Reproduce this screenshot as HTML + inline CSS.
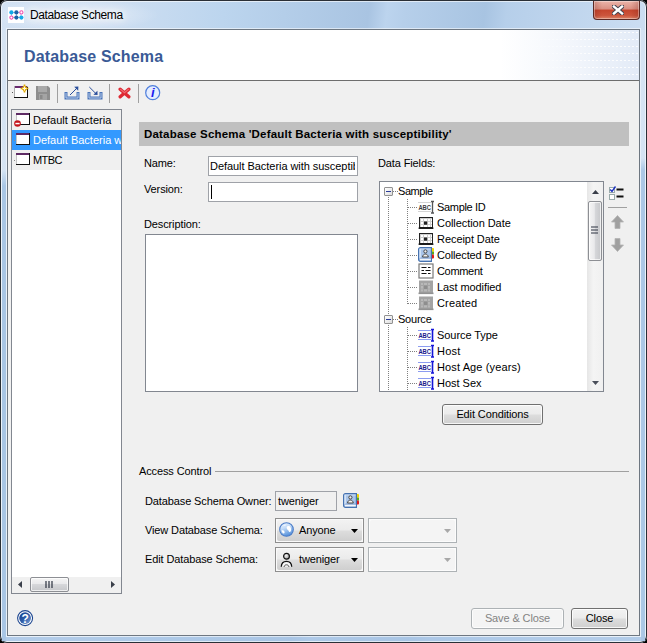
<!DOCTYPE html>
<html><head><meta charset="utf-8"><title>Database Schema</title>
<style>
*{box-sizing:border-box;margin:0;padding:0}
html,body{width:647px;height:643px;overflow:hidden;background:#000}
body{font-family:"Liberation Sans",sans-serif;font-size:11px;color:#000;position:relative}
div,span,svg{position:absolute}
.t{white-space:nowrap;line-height:14px;height:14px;letter-spacing:-.12px}
/* window frame */
#win{left:0;top:0;width:647px;height:643px;border-radius:7px;background:linear-gradient(97deg,#d3e2f3 0%,#cbddf1 18%,#bcd5ee 31%,#a9c4e2 51%,#bcd4ee 53.5%,#b6cfea 56%,#a8c4e2 67%,#b6cfea 70%,#cfe0f3 93%,#c8dbf0 100%);box-shadow:inset 0 0 0 1px #2a2f36, inset 0 0 0 2px rgba(255,255,255,.6)}
#clientglow{left:6px;top:28px;width:635px;height:609px;border:1px solid rgba(255,255,255,.55)}
#client{left:7px;top:29px;width:633px;height:607px;border:1px solid #6e7781;background:#f0f0f0}
#title{left:30px;top:8px;font-size:12px;letter-spacing:-.4px;text-shadow:0 0 6px #fff,0 0 10px #fff,0 0 14px rgba(255,255,255,.9)}
/* close button */
#closeb{left:593px;top:1px;width:47px;height:19px;border-radius:0 0 4px 4px;border:1px solid #5b2a25;border-top:none;background:linear-gradient(90deg,rgba(120,30,20,.25) 0%,rgba(120,30,20,0) 18%,rgba(120,30,20,0) 82%,rgba(120,30,20,.25) 100%),linear-gradient(180deg,#ebb5aa 0%,#d98f82 45%,#c5452d 50%,#cc553c 80%,#dc8468 100%);box-shadow:inset 0 0 0 1px rgba(255,255,255,.35)}
/* header */
#hdr{left:8px;top:30px;width:631px;height:50px;background:linear-gradient(90deg,#fff 0%,#fff 78%,#f4f7fc 88%,#e3ebf7 100%)}
.dl{left:520px;width:119px;height:1px;background:repeating-linear-gradient(90deg,rgba(255,255,255,.85) 0,rgba(255,255,255,.85) 2px,transparent 2px,transparent 4px);-webkit-mask-image:linear-gradient(90deg,transparent,#000 60%);mask-image:linear-gradient(90deg,transparent,#000 60%)}
#hdrline{left:8px;top:80px;width:631px;height:1px;background:#6d6d6d}
#hdrt{left:24px;top:48px;font-size:16px;font-weight:bold;color:#3a5a96;letter-spacing:.15px;line-height:18px;height:18px}
.sep{width:1px;height:19px;top:84px;background:#a0a0a0}
/* list */
#list{left:11px;top:109px;width:111px;height:485px;border:1px solid #828790;background:#fff}
.row{left:12px;width:109px;height:20px;background:#f0f0f0}
.row.sel{background:#3399ff}
.wi{width:14px;height:12px}
.dot{width:1px;height:1px;background:#8a8a8a;left:14px}
.inp{border:1px solid #9fa2a8;background:#fff}
.btn{border:1px solid #707070;border-radius:3px;background:linear-gradient(180deg,#f2f2f2 0%,#ebebeb 48%,#dddddd 52%,#cfcfcf 100%);box-shadow:inset 0 0 0 1px rgba(255,255,255,.8)}
.btn.cb{border-color:#8e8e8e;border-radius:0;background:#fafafa;box-shadow:none}
.btn.cb::before{content:"";position:absolute;left:1px;top:1px;right:1px;bottom:1px;border-radius:2px;background:linear-gradient(180deg,#f2f2f2 0%,#ebebeb 48%,#dddddd 52%,#cfcfcf 100%)}
.btn.dis{border-color:#adb2b5;background:#f4f4f4;box-shadow:inset 0 0 0 1px #fcfcfc}
.btn.cd{border-radius:0;border-color:#adb2b5;background:#fcfcfc;box-shadow:none}
.btn.cd::before{content:"";position:absolute;left:1px;top:1px;right:1px;bottom:1px;border-radius:2px;background:#f4f4f4}
.btn .t{left:0;right:0;text-align:center}
#tree{left:379px;top:181px;width:225px;height:211px;border:1px solid #828790;background:#fff;overflow:hidden}
.tr{left:57px;line-height:16px;height:16px;white-space:nowrap;letter-spacing:-.12px}
.ti{left:38px;width:16px;height:16px}
.vd{width:1px;background-image:linear-gradient(180deg,#808080 50%,transparent 50%);background-size:1px 2px}
.hd{height:1px;background-image:linear-gradient(90deg,#808080 50%,transparent 50%);background-size:2px 1px}
.exp{width:9px;height:9px;border:1px solid #919191;border-radius:1px;background:linear-gradient(135deg,#fff,#dcdcdc)}
.exp i{position:absolute;left:1px;top:3px;width:5px;height:1px;background:#2a3c9a}
</style></head><body>
<div id="win"></div>
<div style="left:2px;top:30px;width:4px;height:611px;background:linear-gradient(180deg,rgba(214,228,243,.9) 0,rgba(214,228,243,.9) 140px,rgba(169,198,229,1) 156px)"></div><div style="left:641px;top:30px;width:4px;height:611px;background:linear-gradient(180deg,rgba(214,228,243,.9) 0,rgba(214,228,243,.9) 128px,rgba(172,200,230,1) 140px)"></div><div style="left:2px;top:637px;width:643px;height:4px;background:rgba(169,198,229,.75)"></div>
<div id="clientglow"></div>
<div id="client"></div>
<div style="left:2px;top:2px;width:170px;height:26px;background:radial-gradient(ellipse 85px 16px at 72px 13px,rgba(255,255,255,.55),rgba(255,255,255,0))"></div>
<!-- title icon -->
<svg style="left:8px;top:7px" width="16" height="16" viewBox="0 0 16 16"><rect width="16" height="16" fill="#fff"/><path d="M3.5 5.5H13M3.5 10.5H13M3.5 5.5V10.5M8.5 5.5V10.5M13 5.5V10.5" stroke="#9cc8e8" stroke-width="1" fill="none"/><circle cx="3.4" cy="5.4" r="2.1" fill="#11a8e8"/><circle cx="8.4" cy="5.4" r="2.1" fill="#1d62a8"/><circle cx="13.4" cy="5.4" r="1.6" fill="#fff" stroke="#f04cb0" stroke-width="1.1"/><circle cx="3.4" cy="10.6" r="1.6" fill="#fff" stroke="#f04cb0" stroke-width="1.1"/><circle cx="8.4" cy="10.6" r="2.1" fill="#1d62a8"/><circle cx="13.4" cy="10.6" r="2.1" fill="#11a8e8"/></svg>
<span class="t" id="title">Database Schema</span>
<div id="closeb"><svg style="left:18px;top:4px" width="12" height="10" viewBox="0 0 12 10"><path d="M2 1.6L10 8.4M10 1.6L2 8.4" stroke="#43424e" stroke-width="4.4" stroke-linecap="square"/><path d="M2 1.6L10 8.4M10 1.6L2 8.4" stroke="#fff" stroke-width="2.5" stroke-linecap="square"/></svg></div>
<div id="hdr"></div><div class="dl" style="top:32px"></div><div class="dl" style="top:39px"></div><div class="dl" style="top:46px"></div><div class="dl" style="top:53px"></div><div class="dl" style="top:60px"></div><div class="dl" style="top:67px"></div><div class="dl" style="top:74px"></div><div id="hdrline"></div>
<span class="t" id="hdrt">Database Schema</span>

<!-- toolbar -->
<svg style="left:12px;top:83px" width="18" height="18" viewBox="0 0 18 18"><rect x="2.5" y="3.5" width="13" height="11" fill="#fff" stroke="#b0b0b0"/><path d="M2 14.5H16M15.5 4V15" stroke="#111" stroke-width="1"/><rect x="3" y="3" width="12" height="2" fill="#6a2a6e"/><path d="M12.5 2L15.8 5.5L12.5 9L9.2 5.5Z" fill="#e2aa00"/><path d="M12.5 1.4v8.2M8.6 5.5h7.8" stroke="#e2aa00" stroke-width="1.6"/><path d="M12.5 3.5v4M10.5 5.5h4" stroke="#fffbe0" stroke-width="1.2"/><rect x="0" y="9" width="1" height="1" fill="#555"/></svg>
<svg style="left:36px;top:86px" width="14" height="14" viewBox="0 0 14 14"><path d="M0 0H12L14 2V14H0Z" fill="#8e8e8e"/><rect x="2" y="0" width="9" height="6" fill="#a9a9a9"/><rect x="3" y="8" width="8" height="6" fill="#a4a4a4"/><rect x="4" y="9" width="2.5" height="4" fill="#8a8a8a"/></svg>
<div class="sep" style="left:57px"></div>
<svg style="left:64px;top:84px" width="17" height="17" viewBox="0 0 17 17"><path d="M2 8V14H14V8" fill="none" stroke="#4a74b8" stroke-width="3"/><path d="M2 9V14H14V9" fill="none" stroke="#b6cbea" stroke-width="1"/><path d="M6 11L13 4" stroke="#2b4f9c" stroke-width="1"/><path d="M10.2 2.8L14.4 2.6L14.2 6.8Z" fill="#2b4f9c"/></svg>
<svg style="left:87px;top:84px" width="17" height="17" viewBox="0 0 17 17"><path d="M2 8V14H14V8" fill="none" stroke="#4a74b8" stroke-width="3"/><path d="M2 9V14H14V9" fill="none" stroke="#b6cbea" stroke-width="1"/><path d="M2.3 3L9 9.7" stroke="#2b4f9c" stroke-width="1"/><path d="M10.4 6.8L10.6 11L6.4 10.8Z" fill="#2b4f9c"/></svg>
<div class="sep" style="left:109px"></div>
<svg style="left:118px;top:87px" width="13" height="12" viewBox="0 0 13 12"><path d="M2.2 2.2L10.8 9.8M10.8 2.2L2.2 9.8" stroke="#de2a34" stroke-width="3.4" stroke-linecap="round"/><path d="M2.6 2.4L6.5 5.6L10.4 2.4" stroke="#f06a70" stroke-width="1.2" stroke-linecap="round" fill="none"/></svg>
<div class="sep" style="left:138px"></div>
<svg style="left:145px;top:85px" width="16" height="16" viewBox="0 0 16 16"><circle cx="7.7" cy="7.7" r="7" fill="#e4edff" stroke="#4f7fdc" stroke-width="1.2"/><text x="7.9" y="12.2" font-family="Liberation Sans,sans-serif" font-style="italic" font-weight="bold" font-size="13" fill="#1a1af0" text-anchor="middle">i</text></svg>

<!-- list -->
<div id="list"></div>
<div class="row" style="top:110px"></div>
<div class="row sel" style="top:130px"></div>
<div class="row" style="top:150px"></div>
<svg class="wi" style="left:16px;top:113px" viewBox="0 0 14 12"><rect x=".5" y=".5" width="13" height="11" fill="#fff" stroke="#c4c4c4"/><path d="M0 11.5H14M13.5 0V12" stroke="#111"/><rect x="0" y="0" width="13" height="2" fill="#5e2a64"/></svg>
<svg style="left:14px;top:120px" width="7" height="7" viewBox="0 0 8 8"><circle cx="4" cy="4" r="3.8" fill="#c4141c"/><rect x="1.6" y="3.2" width="4.8" height="1.7" fill="#fff"/></svg>
<svg class="wi" style="left:16px;top:133px" viewBox="0 0 14 12"><rect x=".5" y=".5" width="13" height="11" fill="#fff" stroke="#c4c4c4"/><path d="M0 11.5H14M13.5 0V12" stroke="#111"/><rect x="0" y="0" width="13" height="2" fill="#5e2a64"/></svg>
<svg class="wi" style="left:16px;top:153px" viewBox="0 0 14 12"><rect x=".5" y=".5" width="13" height="11" fill="#fff" stroke="#c4c4c4"/><path d="M0 11.5H14M13.5 0V12" stroke="#111"/><rect x="0" y="0" width="13" height="2" fill="#5e2a64"/></svg>
<div class="dot" style="top:140px"></div><div class="dot" style="top:160px"></div><span class="t" style="left:33px;top:113px;letter-spacing:0">Default Bacteria</span>
<div style="left:33px;top:133px;width:88px;height:14px;overflow:hidden"><span class="t" style="left:0;top:0;color:#fff;letter-spacing:0">Default Bacteria with susceptibility</span></div>
<span class="t" style="left:33px;top:153px;letter-spacing:-.6px">MTBC</span>
<!-- list hscroll -->
<div style="left:12px;top:577px;width:109px;height:16px;background:#f0f0f0"></div>
<div style="left:30px;top:577px;width:39px;height:15px;border:1px solid #8d8f94;border-radius:2px;background:linear-gradient(180deg,#f5f5f5 0%,#e9e9eb 45%,#d6d7da 50%,#c6c7ca 100%);box-shadow:inset 0 0 0 1px rgba(255,255,255,.7)"></div>
<svg style="left:45px;top:581px" width="9" height="8" viewBox="0 0 9 8"><path d="M1 0V7M4 0V7M7 0V7" stroke="#2c3240" stroke-width="1.2"/></svg>
<svg style="left:18px;top:581px" width="4" height="7" viewBox="0 0 4 7"><path d="M4 0L0 3.5L4 7Z" fill="#3a3f4a"/></svg>
<svg style="left:111px;top:581px" width="4" height="7" viewBox="0 0 4 7"><path d="M0 0L4 3.5L0 7Z" fill="#3a3f4a"/></svg>

<!-- right panel -->
<div style="left:139px;top:122px;width:490px;height:24px;background:#c0c0c0"></div>
<span class="t" style="left:144px;top:127px;font-weight:bold;font-size:11.5px;letter-spacing:.19px">Database Schema 'Default Bacteria with susceptibility'</span>
<span class="t" style="left:144px;top:156px">Name:</span>
<div class="inp" style="left:208px;top:156px;width:150px;height:20px"><div style="left:0;top:0;width:146px;height:18px;overflow:hidden"><span class="t" style="left:1px;top:2px;letter-spacing:-.05px">Default Bacteria with susceptibility</span></div></div>
<span class="t" style="left:144px;top:182px">Version:</span>
<div class="inp" style="left:208px;top:182px;width:150px;height:20px"></div>
<div style="left:211px;top:185px;width:1px;height:14px;background:#000"></div>
<span class="t" style="left:144px;top:217px">Description:</span>
<div class="inp" style="left:145px;top:234px;width:213px;height:158px;border-color:#828790"></div>
<span class="t" style="left:378px;top:156px">Data Fields:</span>

<!-- tree -->
<div id="tree">
 <div class="vd" style="left:8px;top:15px;height:196px"></div>
 <div class="vd" style="left:27px;top:17px;height:106px"></div>
 <div class="vd" style="left:27px;top:145px;height:66px"></div>
 <div class="hd" style="left:13px;top:9px;width:6px"></div>
 <div class="hd" style="left:13px;top:137px;width:6px"></div>
 <div class="exp" style="left:4px;top:5px"><i></i></div>
 <div class="exp" style="left:4px;top:133px"><i></i></div>
 <span class="tr" style="left:18px;top:1px;letter-spacing:-0.44px">Sample</span>
 <span class="tr" style="left:18px;top:129px;letter-spacing:-0.22px">Source</span>
 <div class="hd" style="left:28px;top:25px;width:10px"></div>
 <div class="hd" style="left:28px;top:41px;width:10px"></div>
 <div class="hd" style="left:28px;top:57px;width:10px"></div>
 <div class="hd" style="left:28px;top:73px;width:10px"></div>
 <div class="hd" style="left:28px;top:89px;width:10px"></div>
 <div class="hd" style="left:28px;top:105px;width:10px"></div>
 <div class="hd" style="left:28px;top:121px;width:10px"></div>
 <div class="hd" style="left:28px;top:153px;width:10px"></div>
 <div class="hd" style="left:28px;top:169px;width:10px"></div>
 <div class="hd" style="left:28px;top:185px;width:10px"></div>
 <div class="hd" style="left:28px;top:201px;width:10px"></div>
 <span class="tr" style="top:17px;letter-spacing:-0.32px">Sample ID</span>
 <span class="tr" style="top:33px;letter-spacing:-0.06px">Collection Date</span>
 <span class="tr" style="top:49px;letter-spacing:-0.06px">Receipt Date</span>
 <span class="tr" style="top:65px;letter-spacing:-0.15px">Collected By</span>
 <span class="tr" style="top:81px;letter-spacing:-0.32px">Comment</span>
 <span class="tr" style="top:97px;letter-spacing:-0.08px">Last modified</span>
 <span class="tr" style="top:113px;letter-spacing:0.16px">Created</span>
 <span class="tr" style="top:145px;letter-spacing:-0.06px">Source Type</span>
 <span class="tr" style="top:161px;letter-spacing:0.21px">Host</span>
 <span class="tr" style="top:177px;letter-spacing:0.12px">Host Age (years)</span>
 <span class="tr" style="top:193px;letter-spacing:-0.02px">Host Sex</span>
<svg class="ti" style="top:17px" viewBox="0 0 16 16"><path d="M0 3.5H13M0 12.5H13" stroke="#d4d4d4"/><text x="0.4" y="10.7" font-family="Liberation Sans,sans-serif" font-weight="bold" font-size="6.4" fill="#3c3c3c" textLength="12.6" lengthAdjust="spacingAndGlyphs">ABC</text><path d="M14.5 2V14.5M13 2.5H16M13 14H16" stroke="#555" stroke-width="1.3"/></svg><svg class="ti" style="top:33px" viewBox="0 0 16 16"><rect x="1.5" y="2.5" width="13" height="10" fill="#cfcfcf" stroke="#222" stroke-width="1"/><path d="M0.6 13.2H15.4" stroke="#111" stroke-width="1.5"/><g fill="#fff"><rect x="3" y="4" width="2" height="2"/><rect x="6" y="4" width="3" height="2"/><rect x="10" y="4" width="2" height="2"/><rect x="13" y="4" width="1" height="2"/><rect x="3" y="7" width="2" height="2"/><rect x="10" y="7" width="2" height="2"/><rect x="13" y="7" width="1" height="2"/><rect x="3" y="10" width="2" height="2"/><rect x="6" y="10" width="3" height="2"/><rect x="10" y="10" width="2" height="2"/><rect x="13" y="10" width="1" height="2"/></g><rect x="6" y="6.5" width="3.2" height="3.2" fill="#222"/></svg><svg class="ti" style="top:49px" viewBox="0 0 16 16"><rect x="1.5" y="2.5" width="13" height="10" fill="#cfcfcf" stroke="#222" stroke-width="1"/><path d="M0.6 13.2H15.4" stroke="#111" stroke-width="1.5"/><g fill="#fff"><rect x="3" y="4" width="2" height="2"/><rect x="6" y="4" width="3" height="2"/><rect x="10" y="4" width="2" height="2"/><rect x="13" y="4" width="1" height="2"/><rect x="3" y="7" width="2" height="2"/><rect x="10" y="7" width="2" height="2"/><rect x="13" y="7" width="1" height="2"/><rect x="3" y="10" width="2" height="2"/><rect x="6" y="10" width="3" height="2"/><rect x="10" y="10" width="2" height="2"/><rect x="13" y="10" width="1" height="2"/></g><rect x="6" y="6.5" width="3.2" height="3.2" fill="#222"/></svg><svg class="ti" style="top:65px" viewBox="0 0 16 16"><rect x="13" y="1" width="3" height="3.8" rx="1" fill="#f2d400"/><rect x="13" y="4.6" width="3" height="3" fill="#5ca81c"/><rect x="13" y="7.4" width="3" height="4.2" rx="1" fill="#e01818"/><path d="M2.6 .6H13.4V14.4H2.6C1.4 14.4 .6 13.6 .6 12.4V2.6C.6 1.4 1.4 .6 2.6 .6Z" fill="#a9c4e9" stroke="#4672b0" stroke-width="1.2"/><rect x="1.4" y="1.6" width="1.6" height="9.6" fill="#d2e2f6"/><rect x="3" y="1.6" width="9.6" height="1" fill="#c4d8f2"/><path d="M2 11.2H12.8" stroke="#6a8ec8" stroke-width=".8"/><rect x="2" y="11.7" width="10.8" height="1.6" fill="#f4f6fa"/><circle cx="7.4" cy="4.4" r="1.6" fill="#ececec" stroke="#3a3a3a" stroke-width=".9"/><path d="M4.5 10C4.9 7.9 6 7.1 7.4 7.1C8.8 7.1 9.9 7.9 10.3 10Z" fill="#f2f2f2" stroke="#3a3a3a" stroke-width=".9"/></svg><svg class="ti" style="top:81px" viewBox="0 0 16 16"><rect x="1" y="1" width="14" height="14" fill="#fff" stroke="#7a7a7a" stroke-width="1.2"/><path d="M3.5 4.5H8.5M10 4.5H12.5M3.5 7.5H6M7.5 7.5H12.5M3.5 10.5H8.5M10 10.5H12.5" stroke="#111" stroke-width="1.1"/></svg><svg class="ti" style="top:97px" viewBox="0 0 16 16"><rect x="1" y="1.5" width="14" height="13" fill="#a4a4a4"/><path d="M0.5 14.3H15.5" stroke="#929292" stroke-width="1.6"/><g fill="#b8b8b8"><rect x="3" y="4" width="2" height="2"/><rect x="6" y="4" width="3" height="2"/><rect x="10" y="4" width="2" height="2"/><rect x="3" y="7" width="2" height="2.6"/><rect x="10" y="7" width="2" height="2.6"/><rect x="3" y="10.4" width="2" height="2"/><rect x="6" y="10.4" width="3" height="2"/><rect x="10" y="10.4" width="2" height="2"/></g><rect x="6" y="6.6" width="3.4" height="3.4" fill="#8e8e8e"/></svg><svg class="ti" style="top:113px" viewBox="0 0 16 16"><rect x="1" y="1.5" width="14" height="13" fill="#a4a4a4"/><path d="M0.5 14.3H15.5" stroke="#929292" stroke-width="1.6"/><g fill="#b8b8b8"><rect x="3" y="4" width="2" height="2"/><rect x="6" y="4" width="3" height="2"/><rect x="10" y="4" width="2" height="2"/><rect x="3" y="7" width="2" height="2.6"/><rect x="10" y="7" width="2" height="2.6"/><rect x="3" y="10.4" width="2" height="2"/><rect x="6" y="10.4" width="3" height="2"/><rect x="10" y="10.4" width="2" height="2"/></g><rect x="6" y="6.6" width="3.4" height="3.4" fill="#8e8e8e"/></svg><svg class="ti" style="top:145px" viewBox="0 0 16 16"><path d="M0 3.5H13M0 12.5H13" stroke="#8c9cf0"/><text x="0.4" y="10.7" font-family="Liberation Sans,sans-serif" font-weight="bold" font-size="6.4" fill="#1a1a8c" textLength="12.6" lengthAdjust="spacingAndGlyphs">ABC</text><path d="M14.5 2V14.5M13 2.5H16M13 14H16" stroke="#1414d8" stroke-width="1.6"/></svg><svg class="ti" style="top:161px" viewBox="0 0 16 16"><path d="M0 3.5H13M0 12.5H13" stroke="#8c9cf0"/><text x="0.4" y="10.7" font-family="Liberation Sans,sans-serif" font-weight="bold" font-size="6.4" fill="#1a1a8c" textLength="12.6" lengthAdjust="spacingAndGlyphs">ABC</text><path d="M14.5 2V14.5M13 2.5H16M13 14H16" stroke="#1414d8" stroke-width="1.6"/></svg><svg class="ti" style="top:177px" viewBox="0 0 16 16"><path d="M0 3.5H13M0 12.5H13" stroke="#8c9cf0"/><text x="0.4" y="10.7" font-family="Liberation Sans,sans-serif" font-weight="bold" font-size="6.4" fill="#1a1a8c" textLength="12.6" lengthAdjust="spacingAndGlyphs">ABC</text><path d="M14.5 2V14.5M13 2.5H16M13 14H16" stroke="#1414d8" stroke-width="1.6"/></svg><svg class="ti" style="top:193px" viewBox="0 0 16 16"><path d="M0 3.5H13M0 12.5H13" stroke="#8c9cf0"/><text x="0.4" y="10.7" font-family="Liberation Sans,sans-serif" font-weight="bold" font-size="6.4" fill="#1a1a8c" textLength="12.6" lengthAdjust="spacingAndGlyphs">ABC</text><path d="M14.5 2V14.5M13 2.5H16M13 14H16" stroke="#1414d8" stroke-width="1.6"/></svg>
 <!-- scrollbar -->
 <div style="left:207px;top:0;width:16px;height:209px;background:linear-gradient(90deg,#e6e6e6,#f4f4f4 40%,#f0f0f0)"></div>
 <div style="left:208px;top:19px;width:14px;height:60px;border:1px solid #8d8f94;border-radius:2px;background:linear-gradient(90deg,#f5f5f5 0%,#e9e9eb 45%,#d6d7da 50%,#c6c7ca 100%);box-shadow:inset 0 0 0 1px rgba(255,255,255,.7)"></div>
 <svg style="left:211px;top:44px" width="8" height="9" viewBox="0 0 8 9"><path d="M0 1H7M0 4H7M0 7H7" stroke="#2c3240" stroke-width="1.2"/></svg>
 <svg style="left:212px;top:8px" width="7" height="4" viewBox="0 0 7 4"><path d="M0 4L3.5 0L7 4Z" fill="#3a3f4a"/></svg>
 <svg style="left:212px;top:199px" width="7" height="4" viewBox="0 0 7 4"><path d="M0 0L3.5 4L7 0Z" fill="#4a4f5a"/></svg>
</div>

<!-- side buttons -->
<svg style="left:609px;top:186px" width="15" height="14" viewBox="0 0 15 14"><rect x=".5" y="1.5" width="5" height="5" fill="#fff" stroke="#9aa"/><rect x=".5" y="8.5" width="5" height="5" fill="#fff" stroke="#9aa"/><path d="M1.2 3.5L3 5.5L6.5 0.5" stroke="#1a2fc0" stroke-width="1.4" fill="none"/><path d="M7.5 3.5H14.5M7.5 10.5H14.5" stroke="#111" stroke-width="2"/></svg>
<div style="left:608px;top:207px;width:19px;height:1px;background:#a0a0a0"></div>
<svg style="left:611px;top:215px" width="13" height="14" viewBox="0 0 13 14"><path d="M6.5 0.5L12.5 7H9V13.5H4V7H0.5Z" fill="#a0a0a0" stroke="#b4b4b4" stroke-width=".8"/></svg>
<svg style="left:611px;top:238px" width="13" height="14" viewBox="0 0 13 14"><path d="M6.5 13.5L12.5 7H9V0.5H4V7H0.5Z" fill="#a0a0a0" stroke="#b4b4b4" stroke-width=".8"/></svg>

<div class="btn" style="left:442px;top:404px;width:101px;height:21px"><span class="t" style="top:2px">Edit Conditions</span></div>

<!-- access control -->
<span class="t" style="left:139px;top:464px">Access Control</span>
<div style="left:215px;top:471px;width:414px;height:1px;background:#a0a0a0"></div>
<span class="t" style="left:145px;top:494px">Database Schema Owner:</span>
<div class="inp" style="left:275px;top:491px;width:62px;height:20px;background:#f0f0f0"><span class="t" style="left:2px;top:2px">tweniger</span></div>
<span class="t" style="left:145px;top:523px">View Database Schema:</span>
<span class="t" style="left:145px;top:552px">Edit Database Schema:</span>
<div class="btn cb" style="left:275px;top:518px;width:89px;height:25px"><span class="t" style="left:23px;right:auto;top:4px">Anyone</span></div>
<div class="btn cb" style="left:275px;top:547px;width:89px;height:25px"><span class="t" style="left:23px;right:auto;top:4px">tweniger</span></div>
<svg style="left:351px;top:529px" width="7" height="4" viewBox="0 0 7 4"><path d="M0 0H7L3.5 4Z" fill="#000"/></svg>
<svg style="left:351px;top:558px" width="7" height="4" viewBox="0 0 7 4"><path d="M0 0H7L3.5 4Z" fill="#000"/></svg>
<div class="btn dis cd" style="left:368px;top:518px;width:89px;height:25px"></div>
<div class="btn dis cd" style="left:368px;top:547px;width:89px;height:25px"></div>
<svg style="left:444px;top:529px" width="7" height="4" viewBox="0 0 7 4"><path d="M0 0H7L3.5 4Z" fill="#a8a8a8"/></svg>
<svg style="left:444px;top:558px" width="7" height="4" viewBox="0 0 7 4"><path d="M0 0H7L3.5 4Z" fill="#a8a8a8"/></svg>

<svg style="left:343px;top:493px" width="16" height="16" viewBox="0 0 16 16"><rect x="13" y="1" width="3" height="3.8" rx="1" fill="#f2d400"/><rect x="13" y="4.6" width="3" height="3" fill="#5ca81c"/><rect x="13" y="7.4" width="3" height="4.2" rx="1" fill="#e01818"/><path d="M2.6 .6H13.4V14.4H2.6C1.4 14.4 .6 13.6 .6 12.4V2.6C.6 1.4 1.4 .6 2.6 .6Z" fill="#a9c4e9" stroke="#4672b0" stroke-width="1.2"/><rect x="1.4" y="1.6" width="1.6" height="9.6" fill="#d2e2f6"/><rect x="3" y="1.6" width="9.6" height="1" fill="#c4d8f2"/><path d="M2 11.2H12.8" stroke="#6a8ec8" stroke-width=".8"/><rect x="2" y="11.7" width="10.8" height="1.6" fill="#f4f6fa"/><circle cx="7.4" cy="4.4" r="1.6" fill="#ececec" stroke="#3a3a3a" stroke-width=".9"/><path d="M4.5 10C4.9 7.9 6 7.1 7.4 7.1C8.8 7.1 9.9 7.9 10.3 10Z" fill="#f2f2f2" stroke="#3a3a3a" stroke-width=".9"/></svg>
<svg style="left:279px;top:522px" width="15" height="15" viewBox="0 0 15 15"><defs><linearGradient id="gg" x1="0" y1="0" x2=".4" y2="1"><stop offset="0" stop-color="#f2f8ff"/><stop offset=".45" stop-color="#c4dcf8"/><stop offset="1" stop-color="#5a94dc"/></linearGradient></defs><circle cx="7.5" cy="7.5" r="6.8" fill="url(#gg)" stroke="#4a7cc8" stroke-width="1.1"/><path d="M2.6 8.4C3.6 7.8 4.8 8.4 5.4 9.4C6 10.2 5.4 11 4.8 11.6C3.6 11 2.8 9.8 2.6 8.4Z" fill="#fff"/><path d="M8.2 4.4C9.4 3.8 11 4.2 11.6 5.4C12.2 6.6 12.4 8.2 11.6 9.6C10.8 10.6 10 9.8 9.6 8.8C9.2 7.8 8 7.6 7.8 6.4C7.6 5.6 7.6 4.8 8.2 4.4Z" fill="#fff"/><path d="M4.4 3.2C5.4 2.4 6.6 2.4 7 3C6.6 3.8 5.4 4.2 4.4 4.2Z" fill="#eaf3ff"/></svg>
<svg style="left:280px;top:552px" width="13" height="16" viewBox="0 0 13 16"><defs><radialGradient id="pg" cx=".4" cy=".35" r=".7"><stop offset="0" stop-color="#f4f4f4"/><stop offset="1" stop-color="#9a9a9a"/></radialGradient></defs><circle cx="6.5" cy="4.3" r="2.9" fill="url(#pg)" stroke="#111" stroke-width="1.2"/><path d="M1.3 14.8C1.4 11 3.4 9.3 6.5 9.3C9.6 9.3 11.6 11 11.7 14.8" fill="#f6f6f6" stroke="#111" stroke-width="1.3"/><path d="M4 15C4.4 13.4 5.2 12.8 6.5 12.8C7.8 12.8 8.6 13.4 9 15" fill="none" stroke="#444" stroke-width=".9"/></svg>
<!-- bottom -->
<svg style="left:17px;top:610px" width="17" height="17" viewBox="0 0 17 17"><defs><linearGradient id="hg" x1="0" y1="0" x2="1" y2="1"><stop offset="0" stop-color="#123c8a"/><stop offset=".5" stop-color="#2e5ca8"/><stop offset="1" stop-color="#7ea4d8"/></linearGradient></defs><circle cx="8.1" cy="8.1" r="7.5" fill="#fff" stroke="#1d4690" stroke-width="1.1"/><circle cx="8.1" cy="8.1" r="5.9" fill="url(#hg)"/><text x="8.2" y="12.8" font-family="Liberation Sans,sans-serif" font-weight="bold" font-size="12" fill="#fff" text-anchor="middle">?</text></svg>
<div class="btn dis" style="left:471px;top:608px;width:93px;height:21px"><span class="t" style="top:2px;color:#838383">Save &amp; Close</span></div>
<div class="btn" style="left:571px;top:608px;width:57px;height:21px"><span class="t" style="top:2px">Close</span></div>
</body></html>
